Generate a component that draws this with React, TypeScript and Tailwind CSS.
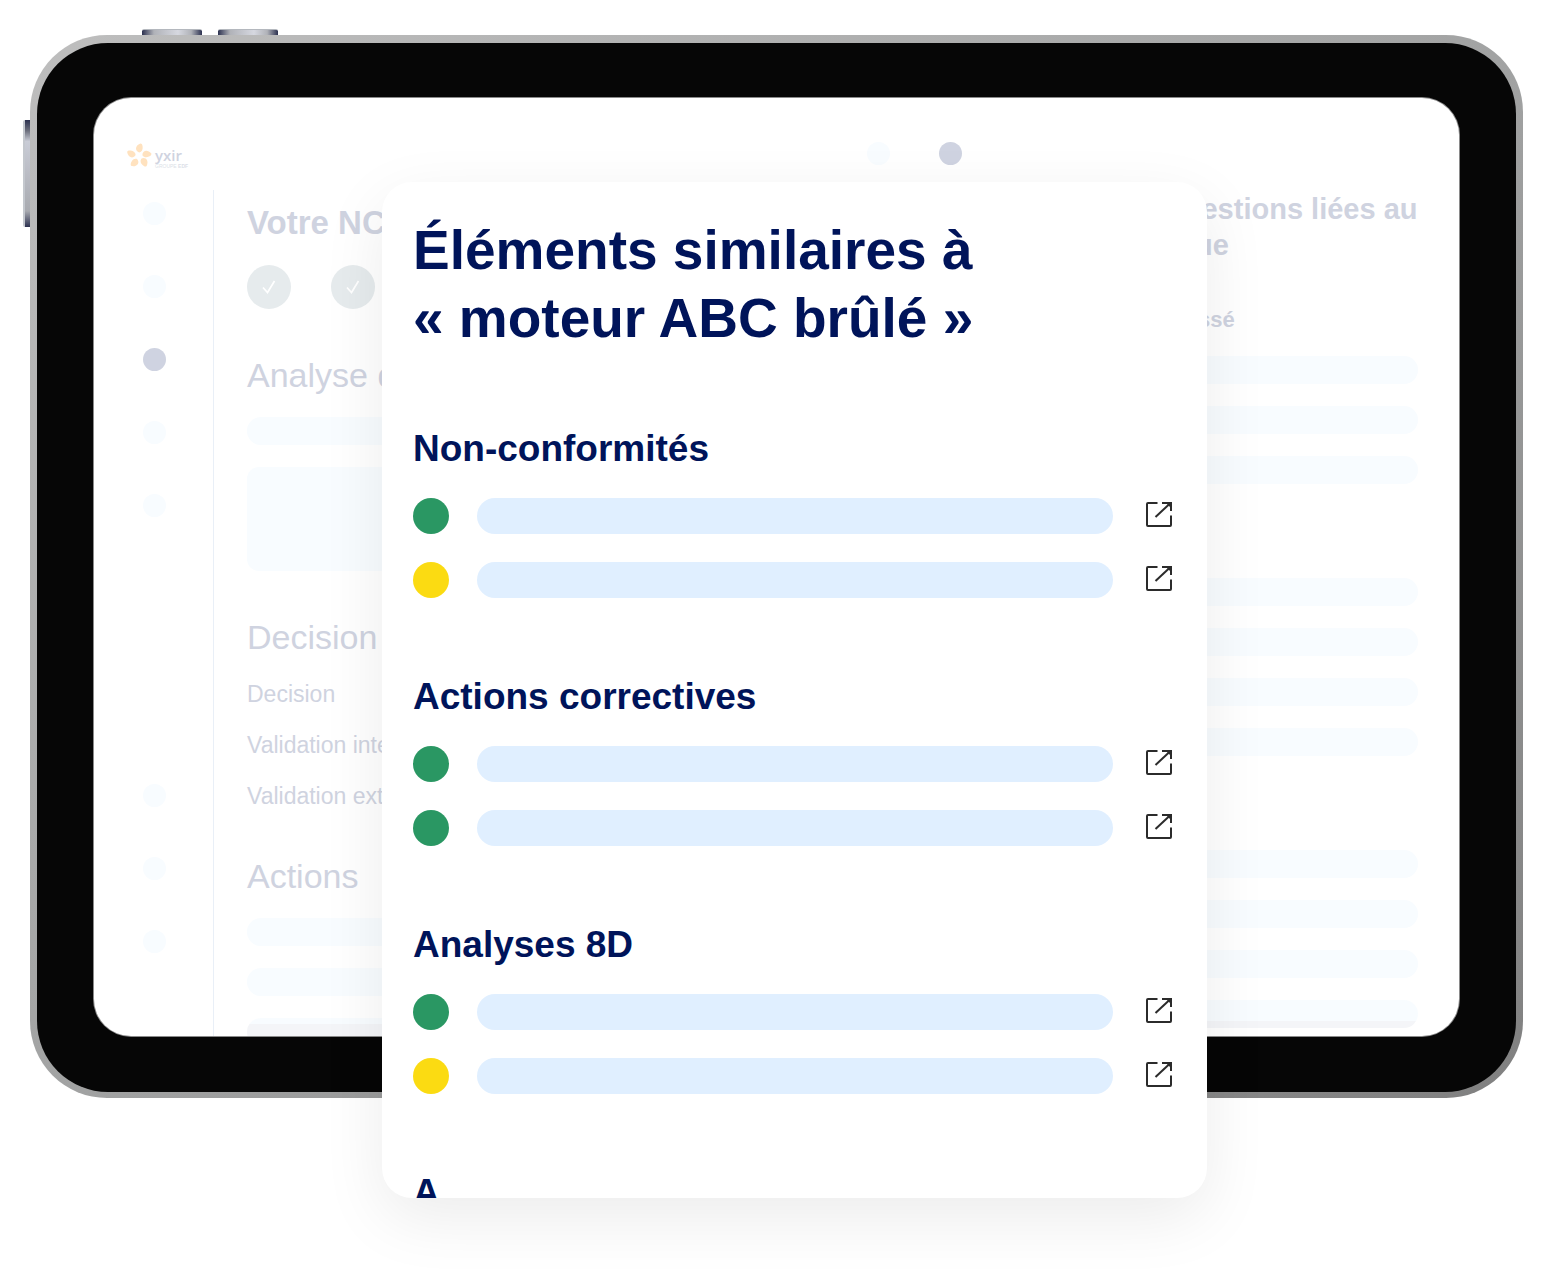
type Status = "green" | "yellow";

type Section = {
  title: string;
  items: Status[];
};

const sections: Section[] = [
  { title: "Non-conformités", items: ["green", "yellow"] },
  { title: "Actions correctives", items: ["green", "green"] },
  { title: "Analyses 8D", items: ["green", "yellow"] },
  { title: "A", items: [] },
];

const suggestionGroups = [3, 4, 4];

function ExternalLinkIcon() {
  return (
    <svg
      viewBox="0 0 26 26"
      className="size-[26px]"
      fill="none"
      stroke="#2b2b2b"
      strokeWidth="2"
      aria-hidden="true"
    >
      <path d="M11.500 1H2a1 1 0 0 0-1 1v21a1 1 0 0 0 1 1h22a1 1 0 0 0 1-1V13.500" />
      <path d="M16 1h9v8" />
      <path d="M9.500 15 24.500 1" />
      <path d="M20 1h5v5z" fill="#2b2b2b" stroke="none" />
    </svg>
  );
}

function Logo() {
  return (
    <svg
      viewBox="0 0 64 30"
      className="h-[30px] w-16"
      role="img"
      aria-label="yxir"
    >
      <g fill="#ffe2bf">
        {[4, 76, 140, 214, 286].map((angle) => (
          <path
            key={angle}
            transform={`rotate(${angle} 13 14)`}
            d="M13 10.500C8.500 9.500 8 4 13.500 1.500c1.500 0 2 1 2.500 3 .5 3-.5 5-3 6z"
          />
        ))}
      </g>
      <text
        x="29"
        y="19"
        fontSize="15"
        fontWeight="600"
        fill="#cfd3e0"
        fontFamily="'Open Sans', sans-serif"
      >
        yxir
      </text>
      <text
        x="29"
        y="26"
        fontSize="5"
        fill="#dcdfe8"
        fontFamily="'Liberation Sans', sans-serif"
      >
        GROUPE <tspan fontWeight="700">EDF</tspan>
      </text>
    </svg>
  );
}

function Dot({ active = false }: { active?: boolean }) {
  return (
    <span
      className={`block size-[23px] rounded-full ${
        active ? "bg-[#cfd3e1]" : "bg-[#f8fcff]"
      }`}
    />
  );
}

function Bar({ className = "bg-[#f8fcff]" }: { className?: string }) {
  return <div className={`h-7 w-full rounded-full ${className}`} />;
}

function CheckStep() {
  return (
    <span className="flex size-11 items-center justify-center rounded-full bg-[#e6ebed]">
      <svg
        viewBox="0 0 14 14"
        className="size-3.5"
        fill="none"
        stroke="white"
        strokeWidth="1.7"
        aria-hidden="true"
      >
        <path d="M1 7.500l4.500 5L12.500 1" />
      </svg>
    </span>
  );
}

function Screen() {
  return (
    <div className="flex aspect-[1365/938] flex-col overflow-hidden rounded-[37px] bg-white text-[#cfd3e0] ring-1 ring-[#8a8a8a]">
      <header className="flex h-[92px] shrink-0 items-center pt-[26px] pl-8">
        <Logo />
        <div className="mb-2 ml-[677px] flex gap-[49px]">
          <Dot />
          <Dot active />
        </div>
      </header>

      <div className="flex min-h-0 flex-1">
        <nav className="flex w-[120px] shrink-0 flex-col items-center gap-[50px] border-r border-[#e9eff7] pt-3 pl-0.5">
          <Dot />
          <Dot />
          <Dot active />
          <Dot />
          <Dot />
          <div className="mt-[217px] flex flex-col gap-[50px]">
            <Dot />
            <Dot />
            <Dot />
          </div>
        </nav>

        <main className="flex flex-1 flex-col gap-[46px] pt-[13px] pl-[33px]">
          <section className="flex flex-col gap-[22px]">
            <h2 className="text-[33px] leading-10 font-bold">Votre NC</h2>
            <div className="flex gap-10">
              <CheckStep />
              <CheckStep />
            </div>
          </section>
          <section className="flex flex-col gap-[22px]">
            <h2 className="text-[34px] leading-10">Analyse de</h2>
            <Bar />
            <div className="h-[104px] rounded-xl bg-[#f8fcff]" />
          </section>
          <section className="flex flex-col gap-[23px] text-[23px] leading-7">
            <h2 className="text-[34px] leading-10">Decision</h2>
            <p>Decision</p>
            <p>Validation interne</p>
            <p>Validation externe</p>
          </section>
          <section className="flex flex-col gap-[22px]">
            <h2 className="text-[34px] leading-10">Actions</h2>
            <Bar />
            <Bar />
            <Bar className="bg-[linear-gradient(#f8fcff_6px,#f4f5f8_6px)]" />
          </section>
        </main>

        <aside className="mr-[41px] w-[289px] shrink-0 pt-px font-bold">
          <h2 className="text-[29px] leading-9">Suggestions liées au lexique</h2>
          <p className="mt-[43px] mb-[22px] pl-2 text-[22px] leading-7">
            Du passé
          </p>
          <div className="flex flex-col gap-[94px]">
            {suggestionGroups.map((count, group) => (
              <div key={group} className="flex flex-col gap-[22px]">
                {Array.from({ length: count }, (_, i) => (
                  <Bar
                    key={i}
                    className={
                      group === 2 && i === count - 1
                        ? "bg-[linear-gradient(#f8fcff_21px,#f4f5f8_21px)]"
                        : "bg-[#f8fcff]"
                    }
                  />
                ))}
              </div>
            ))}
          </div>
        </aside>
      </div>
    </div>
  );
}

function Tablet() {
  return (
    <div className="relative mr-[31px] ml-[30px] rounded-[77px] bg-linear-to-br from-[#bebebe] via-[#a2a3a3] to-[#808080] px-[7px] pt-2 pb-1.5">
      <span className="absolute -top-1.5 left-28 h-1.5 w-[60px] rounded-t-xs border-t border-[#b4b8be] bg-[linear-gradient(90deg,#2c3150,#b0b2b8_20%,#d6d8e0_60%,#b0b2b8_82%,#2c3150)]" />
      <span className="absolute -top-1.5 left-[188px] h-1.5 w-[60px] rounded-t-xs border-t border-[#b4b8be] bg-[linear-gradient(90deg,#2c3150,#b0b2b8_20%,#d6d8e0_60%,#b0b2b8_82%,#2c3150)]" />
      <span className="absolute top-[85px] -left-[7px] h-[107px] w-[7px] rounded-l-xs border-l-2 border-[#c4c8ce] bg-[linear-gradient(#2c3150,#6b6e7c_10%,#c9ccd6_20%,#a8aab0_85%,#2c3150)]" />
      <div className="rounded-[71px] bg-[#060606] px-[57px] pt-[55px] pb-14">
        <Screen />
      </div>
    </div>
  );
}

function ResultRow({ status }: { status: Status }) {
  return (
    <li className="flex items-center">
      <span
        className={`size-9 shrink-0 rounded-full ${
          status === "green" ? "bg-[#2a9763]" : "bg-[#fbdb12]"
        }`}
      />
      <div className="ml-7 h-9 flex-1 rounded-full bg-[#e0efff]" />
      <a href="#" className="ml-[33px] pb-0.5" aria-label="Ouvrir">
        <ExternalLinkIcon />
      </a>
    </li>
  );
}

function SimilarCard() {
  return (
    <div className="absolute top-[182px] right-[347px] left-[382px] h-[1016px] overflow-hidden rounded-[30px] bg-white pt-[34px] pr-[35px] pl-[31px] text-[#00145a] shadow-[0_20px_64px_rgba(0,0,0,0.08)]">
      <h1 className="text-[55px] leading-[68px] font-bold">
        Éléments similaires à<br />« moteur ABC brûlé »
      </h1>
      <div className="mt-[77px] flex flex-col gap-[79px]">
        {sections.map((section) => (
          <section key={section.title}>
            <h2 className="text-[37px] leading-10 font-bold">
              {section.title}
            </h2>
            <ul className="mt-[29px] flex flex-col gap-7">
              {section.items.map((status, index) => (
                <ResultRow key={index} status={status} />
              ))}
            </ul>
          </section>
        ))}
      </div>
    </div>
  );
}

function App() {
  return (
    <div className="relative min-h-screen overflow-hidden bg-white pt-[35px] font-['Liberation_Sans',Arial,sans-serif]">
      <Tablet />
      <SimilarCard />
    </div>
  );
}

export default App;
